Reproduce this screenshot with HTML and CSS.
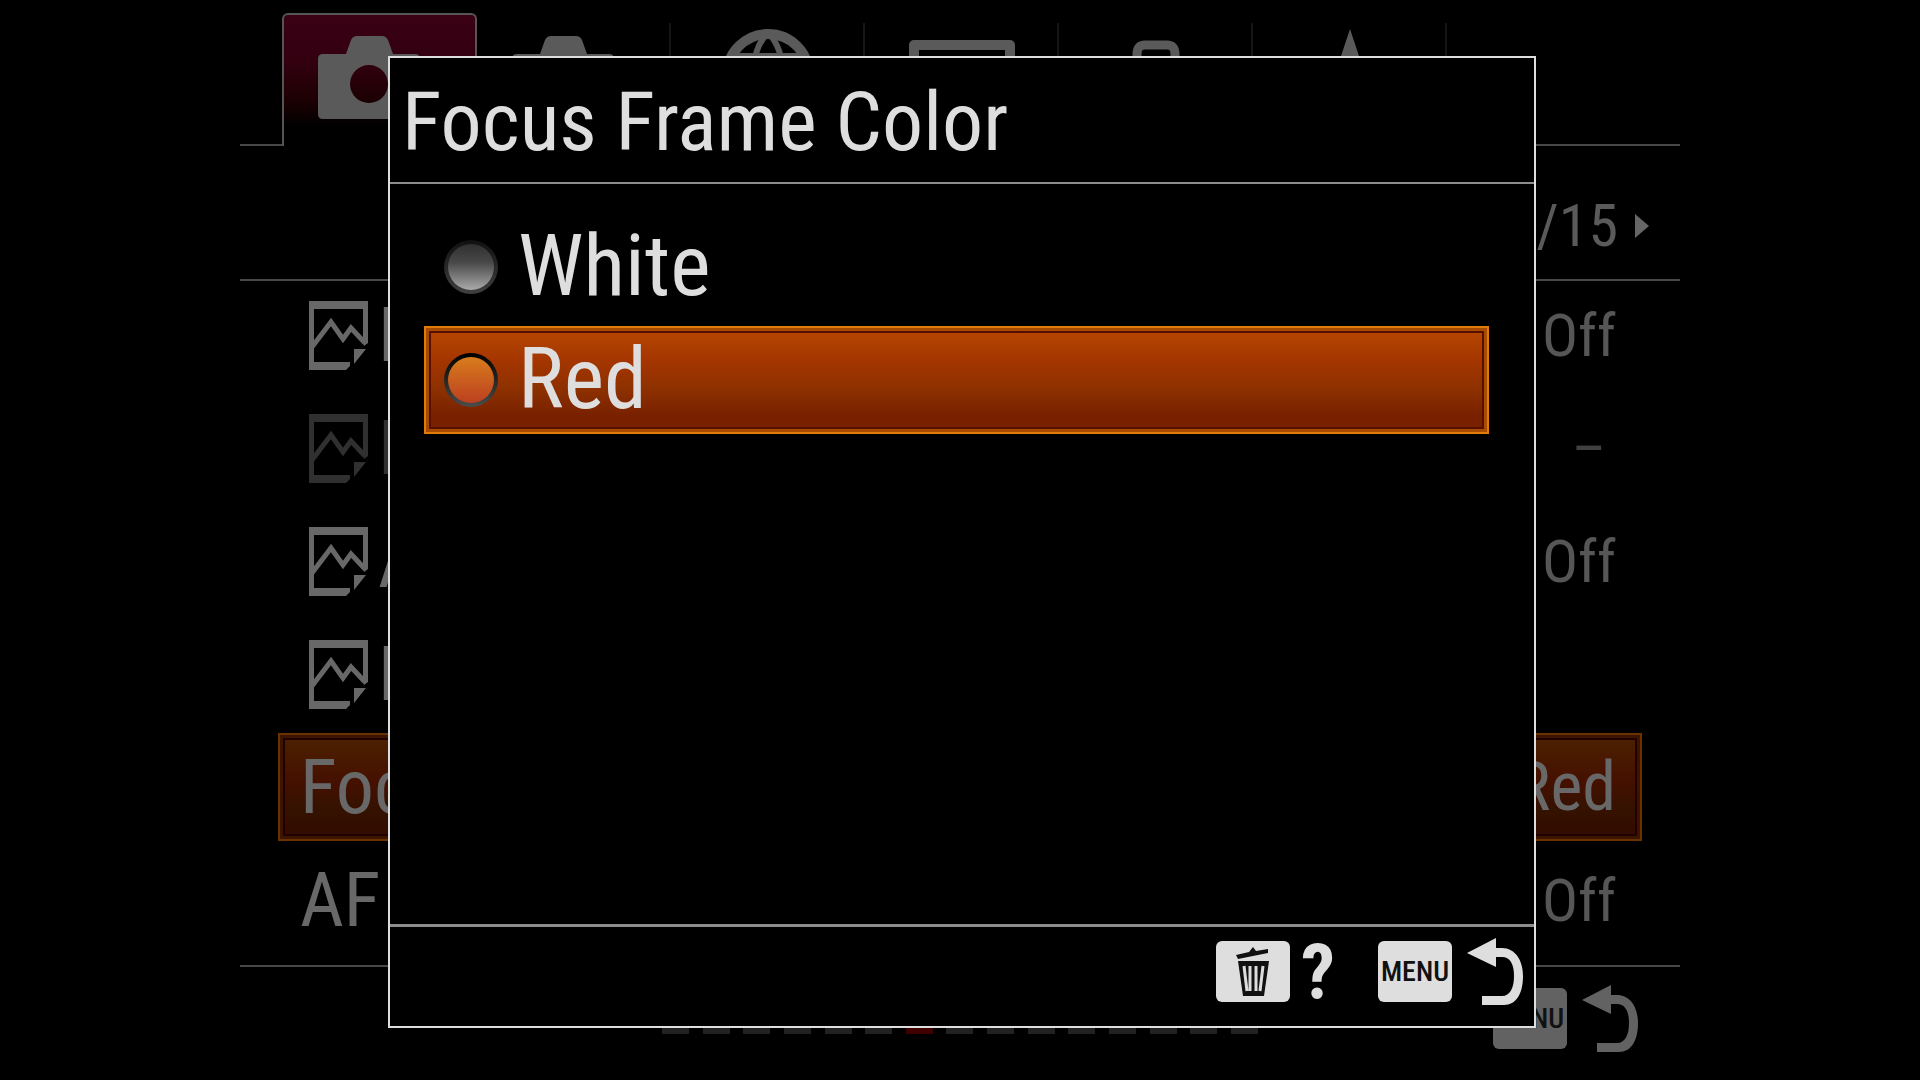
FILE: index.html
```
<!DOCTYPE html>
<html lang="en">
  <head>
    <meta charset="UTF-8" />
    <meta name="viewport" content="width=device-width, initial-scale=1.0" />
    <title>Focus Frame Color</title>
    <link rel="stylesheet" href="styles.css">
  </head>
  <body>
    <svg class="sprite" aria-hidden="true">
      <symbol id="camera" viewBox="0 0 102 84">
        <path fill-rule="evenodd" d="M5 18H28L33 4Q35 0 39 0H64Q68 0 70 4L75 18H97Q102 18 102 23V78Q102 83 97 83H5Q0 83 0 78V23Q0 18 5 18ZM51 29A19 19 0 1 0 51 67A19 19 0 1 0 51 29Z" fill="currentColor" />
      </symbol>
      <symbol id="globe" viewBox="0 0 92 92">
        <g fill="none" stroke="currentColor" stroke-width="6">
          <circle cx="46" cy="46" r="41" stroke-width="10" />
          <path d="M46 4C26 22 26 70 46 88M46 4C66 22 66 70 46 88M4 46H88M12 27H80M12 65H80" />
        </g>
      </symbol>
      <symbol id="monitor" viewBox="0 0 106 84">
        <path d="M5 5H101V65H5ZM30 80H76" fill="none" stroke="currentColor" stroke-width="10" stroke-linejoin="round" />
      </symbol>
      <symbol id="toolbox" viewBox="0 0 100 80">
        <path d="M31 24V14Q31 5 39 5H61Q69 5 69 14V24" fill="none" stroke="currentColor" stroke-width="9" />
        <rect y="22" width="100" height="58" rx="6" fill="currentColor" />
      </symbol>
      <symbol id="star" viewBox="0 0 100 96">
        <path d="M50 0L62 36H100L69 59L81 96L50 73L19 96L31 59L0 36H38Z" fill="currentColor" />
      </symbol>
      <symbol id="still" viewBox="0 0 60 70">
        <path d="M0 0H59V42L55 45L54 42V8H5V61H41V65L37 69H0Z" fill="currentColor" />
        <path d="M3 46L22 21L34 38L42 27L56 42" fill="none" stroke="currentColor" stroke-width="5" />
        <path d="M45 48H57L45 63Z" fill="currentColor" />
      </symbol>
      <symbol id="trash" viewBox="0 0 34 50">
        <path d="M0 8L13 5L17 0L20 4L32 2V6L2 12ZM2 14H33L28 49H7Z" fill="#111" />
        <path d="M8 19L11 44M14 19V44M20 19V44M27 19L24 44" fill="none" stroke="#ddd" stroke-width="3" />
      </symbol>
      <symbol id="return" viewBox="0 0 56 68">
        <path d="M0 15L29 0V10H35C48 10 56 22 56 38C56 56 49 67 37 67H15V58H35C43 58 47 50 47 38C47 26 43 19 35 19H29V29Z" fill="currentColor" />
      </symbol>
    </svg>

    <main class="screen">
      <nav class="tabs">
        <button class="tab camera-tab active" aria-label="Camera 1"><svg width="102" height="84"><use href="#camera" /></svg></button>
        <button class="tab camera-tab" aria-label="Camera 2"><svg width="102" height="84"><use href="#camera" /></svg></button>
        <button class="tab" aria-label="Network"><svg width="92" height="92"><use href="#globe" /></svg></button>
        <button class="tab low" aria-label="Playback"><svg width="106" height="84"><use href="#monitor" /></svg></button>
        <button class="tab low" aria-label="Setup"><svg width="100" height="80"><use href="#toolbox" /></svg></button>
        <button class="tab" aria-label="My Menu"><svg width="100" height="96"><use href="#star" /></svg></button>
      </nav>

      <div class="page-number">
        <span>7/15</span>
        <button class="next" aria-label="Next page"></button>
      </div>

      <div class="menu">
        <button class="row"><svg class="still" width="60" height="70"><use href="#still" /></svg><span class="name">F</span><span class="value">Off</span></button>
        <button class="row" disabled><svg class="still" width="60" height="70"><use href="#still" /></svg><span class="name">F</span><span class="value dash">–</span></button>
        <button class="row"><svg class="still" width="60" height="70"><use href="#still" /></svg><span class="name">AF</span><span class="value">Off</span></button>
        <button class="row"><svg class="still" width="60" height="70"><use href="#still" /></svg><span class="name">F</span></button>
        <button class="row selected"><span class="name">Focus Frame Color</span><span class="value">Red</span></button>
        <button class="row"><span class="name">AF</span><span class="value">Off</span></button>
      </div>

      <footer class="bottom">
        <div class="dashes">
          <i></i><i></i><i></i><i></i><i></i><i></i><i class="current"></i><i></i><i></i><i></i><i></i><i></i><i></i><i></i><i></i>
        </div>
        <button class="key-button" aria-label="Menu, back"><span class="key">MENU</span><svg width="56" height="68"><use href="#return" /></svg></button>
      </footer>

      <section class="dialog" role="dialog" aria-labelledby="title">
        <h1 id="title">Focus Frame Color</h1>
        <div class="options">
          <label class="option"><input type="radio" name="color"><span>White</span></label>
          <label class="option"><input type="radio" name="color" checked><span>Red</span></label>
        </div>
        <footer class="keys">
          <button class="key-button help" aria-label="Help"><span class="key"><svg width="34" height="50"><use href="#trash" /></svg></span><span class="question">?</span></button>
          <button class="key-button" aria-label="Menu, back"><span class="key">MENU</span><svg width="56" height="68"><use href="#return" /></svg></button>
        </footer>
      </section>
    </main>
  </body>
</html>
```
FILE: styles.css
```
:root {
  --light: #dedede;
  --dim: #5a5a5a;
  --line: #484848;
}

*,
*::before,
*::after {
  box-sizing: border-box;
  margin: 0;
  padding: 0;
}

body {
  background-color: black;
  color: var(--light);
  font-family: "Roboto Condensed", "Liberation Sans Narrow", "Liberation Sans", sans-serif;
}

button {
  background: none;
  border: none;
  color: inherit;
  font: inherit;
}

svg {
  display: block;
  flex: none;
}

.sprite {
  position: absolute;
  width: 0;
  height: 0;
}

.screen {
  position: relative;
  width: 75%;
  min-height: 100vh;
  margin: 0 auto;
  display: flex;
  flex-direction: column;
  overflow: hidden;
  color: var(--dim);
}

.tabs {
  display: flex;
  height: 146px;
  padding-top: 13px;
}

.tabs::before,
.tabs::after {
  content: "";
  flex: 0 0 42px;
  border-bottom: 2px solid var(--line);
}

.tabs::after {
  flex: 1;
}

.tab {
  flex: 0 0 194px;
  display: flex;
  justify-content: center;
  padding-top: 16px;
  border-bottom: 2px solid var(--line);
  background: linear-gradient(#151515, #151515) right 10px / 2px 90px no-repeat;
}

.tab.low {
  padding-top: 27px;
}

.camera-tab {
  padding: 23px 22px 0 0;
}

.tab.active {
  flex-basis: 195px;
  padding-top: 21px;
  border: 2px solid #555;
  border-bottom: none;
  border-radius: 6px 6px 0 0;
  background: linear-gradient(#3a0014, #330010 35%, #1c0003 65%, black 85%);
}

.page-number {
  height: 135px;
  padding: 26px 31px 0 0;
  display: flex;
  align-items: center;
  justify-content: flex-end;
  gap: 17px;
  border-bottom: 2px solid var(--line);
  font-size: 60px;
}

.next {
  border-left: 14px solid #666;
  border-top: 12px solid transparent;
  border-bottom: 12px solid transparent;
}

.menu {
  display: flex;
  flex-direction: column;
  gap: 5px;
  padding: 0 38px 11px;
  border-bottom: 2px solid var(--line);
}

.row {
  height: 108px;
  display: flex;
  align-items: center;
  padding: 0 24px 0 20px;
  border: 2px solid transparent;
  color: #686868;
  font-size: 76px;
  white-space: nowrap;
}

.row:disabled {
  color: #303030;
}

.row.selected {
  border-color: #6b3200;
  background: linear-gradient(#4d2200, #451000 45%, #351200 70%, #320b00);
  box-shadow: inset 0 0 0 3px #3c1500, inset 0 0 0 5px #220000;
}

.still {
  margin: 2px 9px 0;
}

.value {
  margin-left: auto;
  color: #565656;
  font-size: 60px;
}

.dash {
  margin-right: 10px;
  color: #404040;
}

.selected .value {
  color: #686868;
  font-size: 68px;
}

.bottom {
  flex: 1;
  display: flex;
  align-items: center;
  justify-content: flex-end;
  padding: 0 42px 10px 0;
}

.dashes {
  width: 596px;
  margin: 22px auto 0 422px;
  display: flex;
  justify-content: space-between;
}

.dashes i {
  width: 27px;
  height: 8px;
  background-color: #222;
}

.dashes .current {
  background-color: #400000;
}

.key-button {
  display: flex;
  align-items: center;
  gap: 15px;
}

.key {
  width: 74px;
  height: 61px;
  display: flex;
  align-items: center;
  justify-content: center;
  border-radius: 6px;
  background-color: currentColor;
  font-size: 28px;
  font-weight: 500;
  -webkit-text-fill-color: #111;
}

.bottom .key-button {
  color: #626262;
}

/* covers the menu behind it */
.dialog {
  position: absolute;
  inset: 56px 144px 52px 148px;
  display: flex;
  flex-direction: column;
  border: 2px solid var(--light);
  background-color: black;
  color: var(--light);
}

h1 {
  height: 126px;
  padding: 4px 12px 0;
  border-bottom: 2px solid #8c8c8c;
  font-size: 82px;
  font-weight: normal;
  line-height: 120px;
}

.options {
  flex: 1;
  display: flex;
  flex-direction: column;
  gap: 5px;
  padding: 29px 45px 0 34px;
}

.option {
  height: 108px;
  display: flex;
  align-items: center;
  gap: 20px;
  padding: 0 0 4px 18px;
  border: 2px solid transparent;
  font-size: 86px;
}

.option:has(:checked) {
  border-color: #e07a08;
  background: linear-gradient(#b84800, #a53600 30%, #8c3000 60%, #782000 85%);
  box-shadow: inset 0 0 0 3px #a84a00, inset 0 0 0 5px #561000;
}

.option input {
  appearance: none;
  width: 54px;
  height: 54px;
  margin-top: 4px;
  border: 4px solid transparent;
  border-radius: 50%;
  background: linear-gradient(#303030, #484848 40%, #aaa) padding-box, linear-gradient(#101010, #404040) border-box;
}

.option input:checked {
  background: linear-gradient(#d87c1c, #bc4020) padding-box, linear-gradient(black, #4c4c48) border-box;
}

.keys {
  height: 102px;
  display: flex;
  align-items: center;
  justify-content: flex-end;
  gap: 43px;
  padding: 0 11px 10px 0;
  border-top: 3px solid #8c8c8c;
}

.question {
  font-size: 76px;
  font-weight: bold;
  line-height: 68px;
}

.help {
  gap: 11px;
}
```
